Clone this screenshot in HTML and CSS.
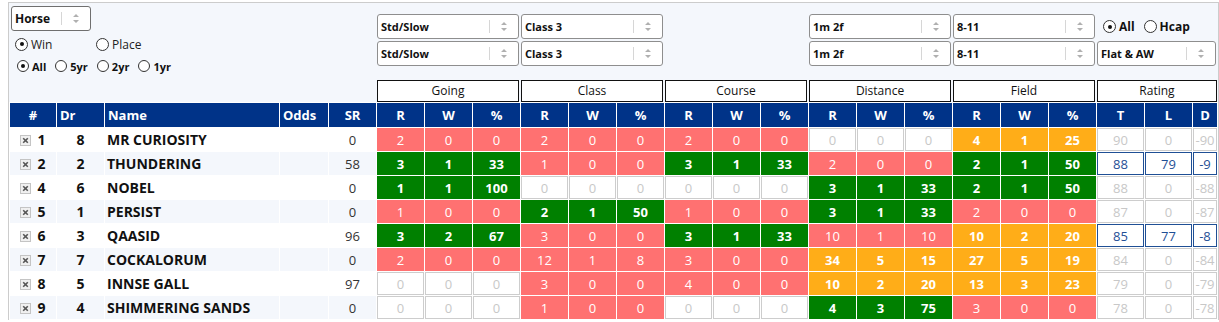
FILE: index.html
```html
<!DOCTYPE html>
<html lang="en">
<head>
  <meta charset="UTF-8" />
  <title>Form Stats</title>
  <link rel="stylesheet" href="styles.css">
</head>
<body>
<div class="panel">

  <!-- Filters -->
  <div class="filters">
    <div class="left">
      <div class="select horse">Horse<span class="arrows"><svg width="6" height="9" viewBox="0 0 6 9"><path d="M3 0L6 3H0Z M0 6H6L3 9Z" fill="#b0b0b0"/></svg></span></div>
      <div class="radios big">
        <label class="opt wide"><span class="radio on"></span>Win</label>
        <label class="opt"><span class="radio"></span>Place</label>
      </div>
      <div class="radios">
        <label class="opt"><span class="radio on"></span>All</label>
        <label class="opt"><span class="radio"></span>5yr</label>
        <label class="opt"><span class="radio"></span>2yr</label>
        <label class="opt"><span class="radio"></span>1yr</label>
      </div>
    </div>

    <div class="sel-col">
      <div class="select">Std/Slow<span class="arrows"><svg width="6" height="9" viewBox="0 0 6 9"><path d="M3 0L6 3H0Z M0 6H6L3 9Z" fill="#b0b0b0"/></svg></span></div>
      <div class="select">Std/Slow<span class="arrows"><svg width="6" height="9" viewBox="0 0 6 9"><path d="M3 0L6 3H0Z M0 6H6L3 9Z" fill="#b0b0b0"/></svg></span></div>
    </div>
    <div class="sel-col">
      <div class="select">Class 3<span class="arrows"><svg width="6" height="9" viewBox="0 0 6 9"><path d="M3 0L6 3H0Z M0 6H6L3 9Z" fill="#b0b0b0"/></svg></span></div>
      <div class="select">Class 3<span class="arrows"><svg width="6" height="9" viewBox="0 0 6 9"><path d="M3 0L6 3H0Z M0 6H6L3 9Z" fill="#b0b0b0"/></svg></span></div>
    </div>
    <div class="sel-col"></div>
    <div class="sel-col">
      <div class="select">1m 2f<span class="arrows"><svg width="6" height="9" viewBox="0 0 6 9"><path d="M3 0L6 3H0Z M0 6H6L3 9Z" fill="#b0b0b0"/></svg></span></div>
      <div class="select">1m 2f<span class="arrows"><svg width="6" height="9" viewBox="0 0 6 9"><path d="M3 0L6 3H0Z M0 6H6L3 9Z" fill="#b0b0b0"/></svg></span></div>
    </div>
    <div class="sel-col">
      <div class="select">8-11<span class="arrows"><svg width="6" height="9" viewBox="0 0 6 9"><path d="M3 0L6 3H0Z M0 6H6L3 9Z" fill="#b0b0b0"/></svg></span></div>
      <div class="select">8-11<span class="arrows"><svg width="6" height="9" viewBox="0 0 6 9"><path d="M3 0L6 3H0Z M0 6H6L3 9Z" fill="#b0b0b0"/></svg></span></div>
    </div>
    <div class="sel-col last">
      <div class="radios race">
        <label class="opt"><span class="radio on"></span>All</label>
        <label class="opt"><span class="radio"></span>Hcap</label>
      </div>
      <div class="select">Flat &amp; AW<span class="arrows"><svg width="6" height="9" viewBox="0 0 6 9"><path d="M3 0L6 3H0Z M0 6H6L3 9Z" fill="#b0b0b0"/></svg></span></div>
    </div>
  </div>

  <!-- Group titles -->
  <div class="groups">
    <div class="group">Going</div>
    <div class="group">Class</div>
    <div class="group">Course</div>
    <div class="group">Distance</div>
    <div class="group">Field</div>
    <div class="group rating">Rating</div>
  </div>

  <table class="form">
    <colgroup>
      <col class="c-num"><col class="c-dr"><col class="c-name"><col class="c-odds"><col class="c-sr">
      <col class="c-st"><col class="c-st"><col class="c-st">
      <col class="c-st"><col class="c-st"><col class="c-st">
      <col class="c-st"><col class="c-st"><col class="c-st">
      <col class="c-st"><col class="c-st"><col class="c-st">
      <col class="c-st"><col class="c-st"><col class="c-st">
      <col class="c-st"><col class="c-st"><col class="c-d">
    </colgroup>
    <thead>
      <tr>
        <th>#</th><th class="lft">Dr</th><th class="lft">Name</th><th class="lft">Odds</th><th>SR</th>
        <th>R</th><th>W</th><th>%</th>
        <th>R</th><th>W</th><th>%</th>
        <th>R</th><th>W</th><th>%</th>
        <th>R</th><th>W</th><th>%</th>
        <th>R</th><th>W</th><th>%</th>
        <th>T</th><th>L</th><th>D</th>
      </tr>
    </thead>
    <tbody>
      <tr>
        <td class="num"><span class="x"><svg width="11" height="11" viewBox="0 0 11 11"><rect x="0.5" y="0.5" width="10" height="10" fill="#f0f0f0" stroke="#c4c4c4"/><path d="M3.2 3.2L7.8 7.8M7.8 3.2L3.2 7.8" stroke="#555" stroke-width="1.6"/></svg></span>1</td>
        <td class="dr">8</td><td class="name">MR CURIOSITY</td><td></td><td class="sr">0</td>
        <td class="r">2</td><td class="r">0</td><td class="r">0</td>
        <td class="r">2</td><td class="r">0</td><td class="r">0</td>
        <td class="r">2</td><td class="r">0</td><td class="r">0</td>
        <td class="e">0</td><td class="e">0</td><td class="e">0</td>
        <td class="o">4</td><td class="o">1</td><td class="o">25</td>
        <td class="t">90</td><td class="t">0</td><td class="t">-90</td>
      </tr>
      <tr>
        <td class="num"><span class="x"><svg width="11" height="11" viewBox="0 0 11 11"><rect x="0.5" y="0.5" width="10" height="10" fill="#f0f0f0" stroke="#c4c4c4"/><path d="M3.2 3.2L7.8 7.8M7.8 3.2L3.2 7.8" stroke="#555" stroke-width="1.6"/></svg></span>2</td>
        <td class="dr">2</td><td class="name">THUNDERING</td><td></td><td class="sr">58</td>
        <td class="g">3</td><td class="g">1</td><td class="g">33</td>
        <td class="r">1</td><td class="r">0</td><td class="r">0</td>
        <td class="g">3</td><td class="g">1</td><td class="g">33</td>
        <td class="r">2</td><td class="r">0</td><td class="r">0</td>
        <td class="g">2</td><td class="g">1</td><td class="g">50</td>
        <td class="b">88</td><td class="b">79</td><td class="b">-9</td>
      </tr>
      <tr>
        <td class="num"><span class="x"><svg width="11" height="11" viewBox="0 0 11 11"><rect x="0.5" y="0.5" width="10" height="10" fill="#f0f0f0" stroke="#c4c4c4"/><path d="M3.2 3.2L7.8 7.8M7.8 3.2L3.2 7.8" stroke="#555" stroke-width="1.6"/></svg></span>4</td>
        <td class="dr">6</td><td class="name">NOBEL</td><td></td><td class="sr">0</td>
        <td class="g">1</td><td class="g">1</td><td class="g">100</td>
        <td class="e">0</td><td class="e">0</td><td class="e">0</td>
        <td class="e">0</td><td class="e">0</td><td class="e">0</td>
        <td class="g">3</td><td class="g">1</td><td class="g">33</td>
        <td class="g">2</td><td class="g">1</td><td class="g">50</td>
        <td class="t">88</td><td class="t">0</td><td class="t">-88</td>
      </tr>
      <tr>
        <td class="num"><span class="x"><svg width="11" height="11" viewBox="0 0 11 11"><rect x="0.5" y="0.5" width="10" height="10" fill="#f0f0f0" stroke="#c4c4c4"/><path d="M3.2 3.2L7.8 7.8M7.8 3.2L3.2 7.8" stroke="#555" stroke-width="1.6"/></svg></span>5</td>
        <td class="dr">1</td><td class="name">PERSIST</td><td></td><td class="sr">0</td>
        <td class="r">1</td><td class="r">0</td><td class="r">0</td>
        <td class="g">2</td><td class="g">1</td><td class="g">50</td>
        <td class="r">1</td><td class="r">0</td><td class="r">0</td>
        <td class="g">3</td><td class="g">1</td><td class="g">33</td>
        <td class="r">2</td><td class="r">0</td><td class="r">0</td>
        <td class="t">87</td><td class="t">0</td><td class="t">-87</td>
      </tr>
      <tr>
        <td class="num"><span class="x"><svg width="11" height="11" viewBox="0 0 11 11"><rect x="0.5" y="0.5" width="10" height="10" fill="#f0f0f0" stroke="#c4c4c4"/><path d="M3.2 3.2L7.8 7.8M7.8 3.2L3.2 7.8" stroke="#555" stroke-width="1.6"/></svg></span>6</td>
        <td class="dr">3</td><td class="name">QAASID</td><td></td><td class="sr">96</td>
        <td class="g">3</td><td class="g">2</td><td class="g">67</td>
        <td class="r">3</td><td class="r">0</td><td class="r">0</td>
        <td class="g">3</td><td class="g">1</td><td class="g">33</td>
        <td class="r">10</td><td class="r">1</td><td class="r">10</td>
        <td class="o">10</td><td class="o">2</td><td class="o">20</td>
        <td class="b">85</td><td class="b">77</td><td class="b">-8</td>
      </tr>
      <tr>
        <td class="num"><span class="x"><svg width="11" height="11" viewBox="0 0 11 11"><rect x="0.5" y="0.5" width="10" height="10" fill="#f0f0f0" stroke="#c4c4c4"/><path d="M3.2 3.2L7.8 7.8M7.8 3.2L3.2 7.8" stroke="#555" stroke-width="1.6"/></svg></span>7</td>
        <td class="dr">7</td><td class="name">COCKALORUM</td><td></td><td class="sr">0</td>
        <td class="r">2</td><td class="r">0</td><td class="r">0</td>
        <td class="r">12</td><td class="r">1</td><td class="r">8</td>
        <td class="r">3</td><td class="r">0</td><td class="r">0</td>
        <td class="o">34</td><td class="o">5</td><td class="o">15</td>
        <td class="o">27</td><td class="o">5</td><td class="o">19</td>
        <td class="t">84</td><td class="t">0</td><td class="t">-84</td>
      </tr>
      <tr>
        <td class="num"><span class="x"><svg width="11" height="11" viewBox="0 0 11 11"><rect x="0.5" y="0.5" width="10" height="10" fill="#f0f0f0" stroke="#c4c4c4"/><path d="M3.2 3.2L7.8 7.8M7.8 3.2L3.2 7.8" stroke="#555" stroke-width="1.6"/></svg></span>8</td>
        <td class="dr">5</td><td class="name">INNSE GALL</td><td></td><td class="sr">97</td>
        <td class="e">0</td><td class="e">0</td><td class="e">0</td>
        <td class="r">3</td><td class="r">0</td><td class="r">0</td>
        <td class="r">4</td><td class="r">0</td><td class="r">0</td>
        <td class="o">10</td><td class="o">2</td><td class="o">20</td>
        <td class="o">13</td><td class="o">3</td><td class="o">23</td>
        <td class="t">79</td><td class="t">0</td><td class="t">-79</td>
      </tr>
      <tr>
        <td class="num"><span class="x"><svg width="11" height="11" viewBox="0 0 11 11"><rect x="0.5" y="0.5" width="10" height="10" fill="#f0f0f0" stroke="#c4c4c4"/><path d="M3.2 3.2L7.8 7.8M7.8 3.2L3.2 7.8" stroke="#555" stroke-width="1.6"/></svg></span>9</td>
        <td class="dr">4</td><td class="name">SHIMMERING SANDS</td><td></td><td class="sr">0</td>
        <td class="e">0</td><td class="e">0</td><td class="e">0</td>
        <td class="r">1</td><td class="r">0</td><td class="r">0</td>
        <td class="e">0</td><td class="e">0</td><td class="e">0</td>
        <td class="g">4</td><td class="g">3</td><td class="g">75</td>
        <td class="r">3</td><td class="r">0</td><td class="r">0</td>
        <td class="t">78</td><td class="t">0</td><td class="t">-78</td>
      </tr>
    </tbody>
  </table>
</div>
</body>
</html>
```

FILE: styles.css
```css
body {
  margin: 0;
  background: #fff;
  font-family: 'Open Sans', sans-serif;
  color: #111;
}

.panel {
  margin: 2px 0 0 8px;
  width: 1209px;
  border: 1px solid #ccc;
  border-bottom: 0;
  background: #f4f7fc;
}

/* Filters */
.filters {
  display: flex;
  height: 77px;
}

.left {
  width: 368px;
  padding: 3px 0 0 2px;
  box-sizing: border-box;
}

.select {
  height: 25px;
  box-sizing: border-box;
  border: 1px solid #8e8e8e;
  border-radius: 3px;
  background: #fff;
  display: flex;
  align-items: center;
  padding-left: 3px;
  font-size: 11px;
  font-weight: bold;
  color: #111;
}

.select.horse {
  width: 80px;
  border-color: #6f6f6f;
  font-size: 12px;
}

.arrows {
  margin-left: auto;
  width: 28px;
  height: 13px;
  border-left: 1px solid #d6d6d6;
  display: flex;
  align-items: center;
  justify-content: center;
}

.sel-col {
  width: 142px;
  margin-right: 2px;
  padding-top: 11px;
  display: flex;
  flex-direction: column;
  gap: 2px;
}

.sel-col.last {
  width: 119px;
  margin-right: 0;
}

.radios {
  display: flex;
  align-items: center;
  height: 16px;
  margin-top: 6px;
  padding-left: 6px;
  font-size: 11px;
  font-weight: bold;
}

.radios.big {
  margin-top: 5px;
  padding-left: 4px;
  font-size: 12px;
  font-weight: normal;
  color: #222;
}

.radios.race {
  height: 25px;
  margin-top: 0;
  padding-left: 6px;
  font-size: 12px;
}

.opt {
  display: flex;
  align-items: center;
  gap: 3px;
  margin-right: 9px;
}

.opt.wide {
  width: 81px;
  margin-right: 0;
}

.radio {
  width: 10px;
  height: 10px;
  border: 1px solid #333;
  border-radius: 50%;
  background: #fff;
  display: flex;
  align-items: center;
  justify-content: center;
}

.big .radio,
.race .radio {
  width: 11px;
  height: 11px;
}

.radio.on::after {
  content: '';
  width: 4px;
  height: 4px;
  border-radius: 50%;
  background: #111;
}

/* Group titles */
.groups {
  display: flex;
  gap: 2px;
  height: 22px;
  padding-left: 368px;
}

.group {
  width: 142px;
  box-sizing: border-box;
  border: 1px solid #111;
  background: #fff;
  font-size: 12px;
  line-height: 20px;
  text-align: center;
  color: #111;
}

.group.rating {
  width: 120px;
}

/* Table */
.form {
  width: 1209px;
  table-layout: fixed;
  border-collapse: separate;
  border-spacing: 1px;
  background: #fff;
  font-size: 13px;
}

.c-num { width: 46px; }
.c-dr { width: 47px; }
.c-name { width: 174px; }
.c-odds { width: 48px; }
.c-sr { width: 47px; }
.c-st { width: 47px; }
.c-d { width: 24px; }

.form th {
  height: 24px;
  padding: 0;
  background: #003388;
  color: #fff;
  font-weight: bold;
  text-align: center;
}

.form th.lft {
  text-align: left;
  padding-left: 3px;
}

.form td {
  height: 21px;
  padding: 0;
  border: 1px solid transparent;
  background: #fff;
  text-align: center;
  white-space: nowrap;
  overflow: hidden;
}

.form tbody tr:nth-child(even) td {
  background: #f4f7fc;
}

.form td.num {
  font-weight: bold;
  font-size: 14px;
}

.x {
  display: inline-block;
  vertical-align: -1px;
  margin-right: 6px;
  line-height: 0;
}

.form td.dr {
  font-weight: bold;
  font-size: 14px;
}

.form td.name {
  text-align: left;
  padding-left: 1px;
  font-weight: bold;
  font-size: 14px;
}

.form td.sr {
  color: #333;
}

/* stat cells */
.form tbody tr td.r {
  background: #ff7171;
  color: #fff;
}

.form tbody tr td.g {
  background: #008000;
  color: #fff;
  font-weight: bold;
}

.form tbody tr td.o {
  background: #ffad18;
  color: #fff;
  font-weight: bold;
}

.form tbody tr td.e,
.form tbody tr td.t {
  background: #fff;
  border-color: #cdcdcd;
  color: #c8c8c8;
}

.form tbody tr td.b {
  background: #fff;
  border-color: #1f4f95;
  color: #1f4f95;
}
```
